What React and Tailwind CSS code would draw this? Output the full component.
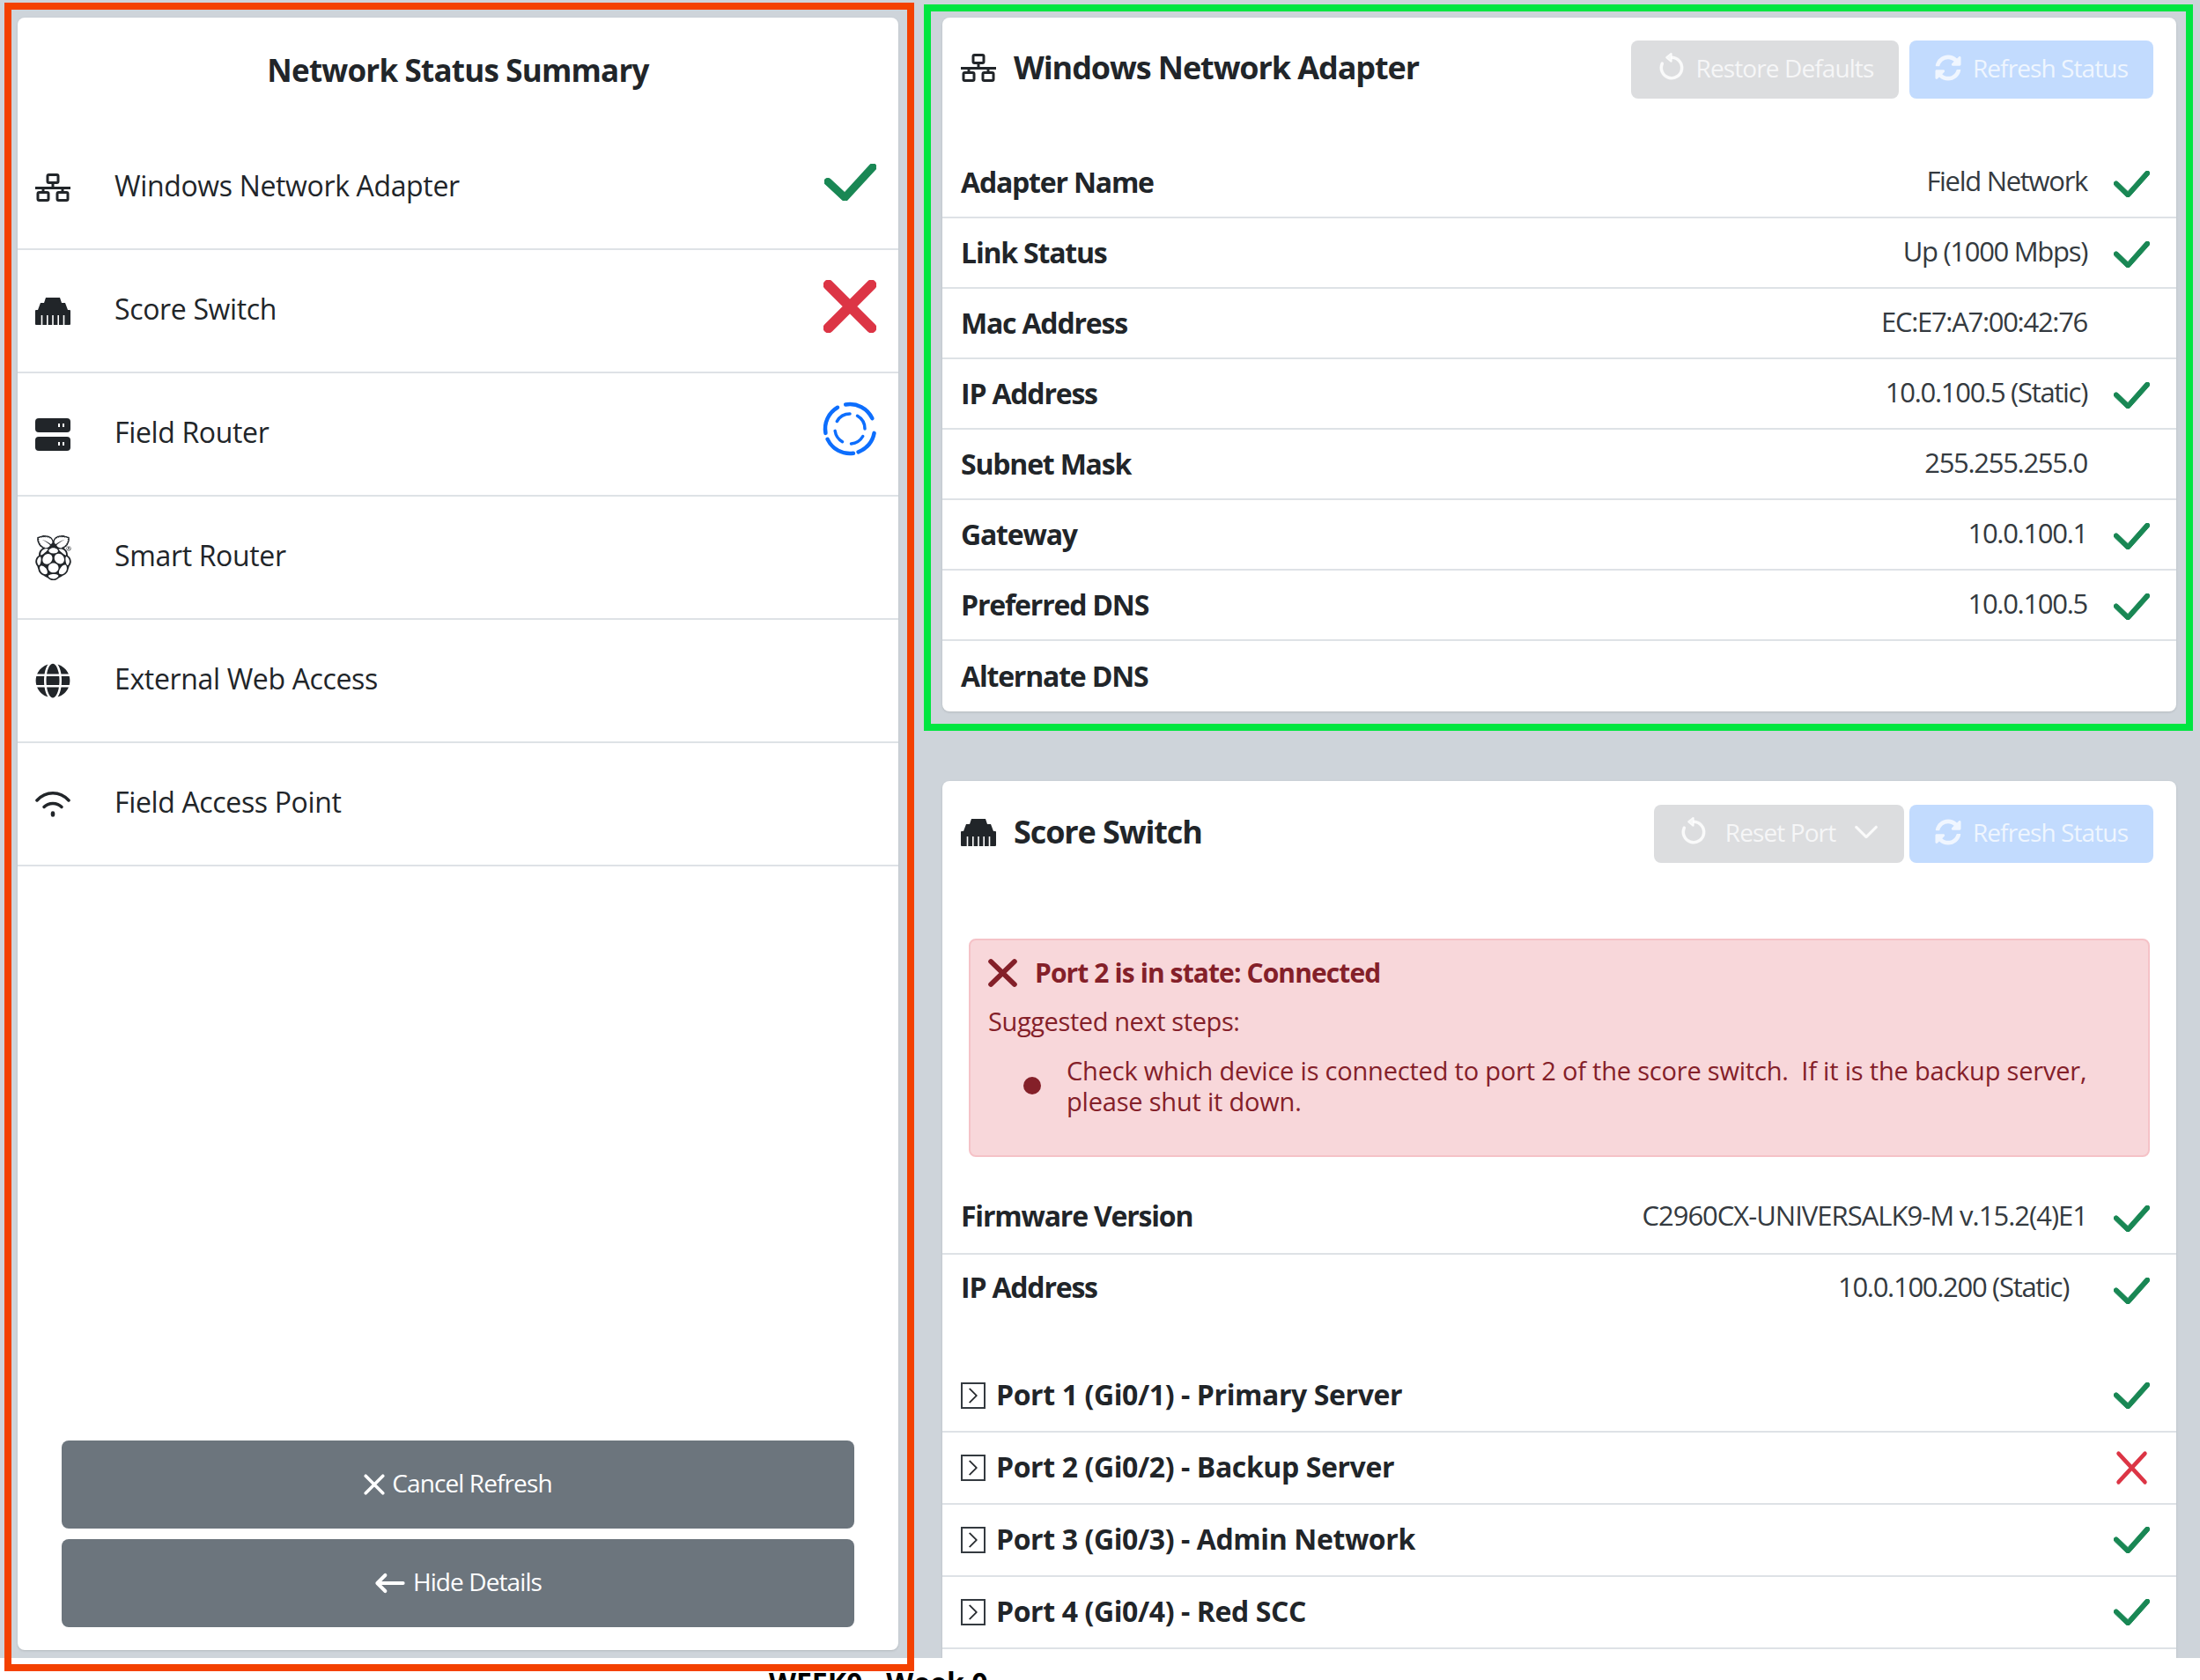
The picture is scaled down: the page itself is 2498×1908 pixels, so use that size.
import { BsArrowCounterclockwise, BsArrowLeft, BsChevronDown, BsChevronRight } from 'react-icons/bs';
import { FaGlobe, FaSyncAlt } from 'react-icons/fa';
import { SiRaspberrypi } from 'react-icons/si';

const CHECK_PATH = 'M12.736 3.97a.733.733 0 0 1 1.047 0c.286.289.29.756.01 1.05L7.88 12.01a.733.733 0 0 1-1.065.02L3.217 8.384a.757.757 0 0 1 0-1.06.733.733 0 0 1 1.047 0l3.052 3.093 5.4-6.425z';

const CheckIcon = ({ className }) => (
  <svg className={className} viewBox="3 3.75 11 8.5" preserveAspectRatio="none" fill="currentColor" stroke="currentColor" strokeWidth="0.25">
    <path d={CHECK_PATH} />
  </svg>
);

const CrossIcon = ({ className, width = 2 }) => (
  <svg className={className} viewBox="0 0 16 16" preserveAspectRatio="none" fill="none" stroke="currentColor" strokeWidth={width} strokeLinecap="round">
    <path d="M1.5 1.5 14.5 14.5M14.5 1.5 1.5 14.5" />
  </svg>
);

// One box on top, a bar, two boxes below
const NetworkIcon = () => (
  <svg className="w-10 h-8 shrink-0" viewBox="0 0 40 32" fill="none" stroke="currentColor" strokeWidth="3">
    <rect x="14" y="1.5" width="12" height="9" rx="1.5" />
    <path d="M20 10.5v6M0 16.5h40M9 16.5v5M31 16.5v5" />
    <rect x="3" y="21.5" width="12" height="9" rx="1.5" />
    <rect x="25" y="21.5" width="12" height="9" rx="1.5" />
  </svg>
);

// Plug seen from the front, five pins at the bottom
const SwitchIcon = ({ className }) => (
  <svg className={className} viewBox="0 0 40 31" fill="currentColor">
    <path d="M12 0h16l2 6h4l3 8h2a1 1 0 0 1 1 1v15a1 1 0 0 1-1 1H1a1 1 0 0 1-1-1V15a1 1 0 0 1 1-1h2l3-8h4z" />
    <path d="M7.5 20v11M13.8 20v11M20 20v11M26.2 20v11M32.5 20v11" stroke="#fff" strokeWidth="1.6" />
  </svg>
);

// Two stacked drives, taller than the stock hdd-stack glyph
const RouterIcon = ({ className }) => (
  <svg className={className} viewBox="0 0 40 37" fill="currentColor">
    <rect width="40" height="16" rx="4" />
    <rect y="21" width="40" height="16" rx="4" />
    <path d="M27 6v4M32 6v4M27 27v4M32 27v4" stroke="#fff" strokeWidth="2" />
  </svg>
);

const WifiIcon = ({ className }) => (
  <svg className={className} viewBox="0 0 40 30" fill="none" stroke="currentColor" strokeWidth="3.5" strokeLinecap="round">
    <path d="M2 11C12 0 28 0 38 11" />
    <path d="M10 18.5C15 13 25 13 30 18.5" />
    <path d="M20 25.5v2" strokeWidth="4.5" />
  </svg>
);

const arc = (r, from, to) => {
  const point = deg => {
    const a = ((deg - 90) * Math.PI) / 180;
    return `${(32 + r * Math.cos(a)).toFixed(2)} ${(32 + r * Math.sin(a)).toFixed(2)}`;
  };
  return `M${point(from)}A${r} ${r} 0 0 1 ${point(to)}`;
};

const SpinnerIcon = ({ className }) => (
  <svg className={className} viewBox="0 0 64 64" fill="none" stroke="currentColor" strokeWidth="4.5" strokeLinecap="round">
    {[[-10, 65], [100, 160], [172, 245], [260, 330]].map(([a, b]) => <path key={a} d={arc(28, a, b)} />)}
    {[[-60, 0], [30, 90], [120, 175], [210, 262]].map(([a, b]) => <path key={a} d={arc(17, a, b)} strokeWidth="3.5" />)}
  </svg>
);

const summary = [
  { name: 'Windows Network Adapter', icon: <NetworkIcon />, status: 'ok' },
  { name: 'Score Switch', icon: <SwitchIcon className="w-10 h-[31px]" />, status: 'bad' },
  { name: 'Field Router', icon: <RouterIcon className="w-10 h-[37px]" />, status: 'busy' },
  { name: 'Smart Router', icon: <SiRaspberrypi size={51} className="shrink-0" />, status: null },
  { name: 'External Web Access', icon: <FaGlobe size={40} />, status: null },
  { name: 'Field Access Point', icon: <WifiIcon className="w-10 h-[30px] shrink-0" />, status: null },
];

const adapterRows = [
  { label: 'Adapter Name', value: 'Field Network', ok: true },
  { label: 'Link Status', value: 'Up (1000 Mbps)', ok: true },
  { label: 'Mac Address', value: 'EC:E7:A7:00:42:76' },
  { label: 'IP Address', value: '10.0.100.5 (Static)', ok: true },
  { label: 'Subnet Mask', value: '255.255.255.0' },
  { label: 'Gateway', value: '10.0.100.1', ok: true },
  { label: 'Preferred DNS', value: '10.0.100.5', ok: true },
  { label: 'Alternate DNS', value: '' },
];

const ports = [
  { name: 'Port 1 (Gi0/1) - Primary Server', ok: true },
  { name: 'Port 2 (Gi0/2) - Backup Server', ok: false },
  { name: 'Port 3 (Gi0/3) - Admin Network', ok: true },
  { name: 'Port 4 (Gi0/4) - Red SCC', ok: true },
];

const SmallCheck = () => <CheckIcon className="w-[41px] h-[30px] text-[#198754] shrink-0" />;

const InfoRow = ({ row, last }) => (
  <div className={`h-20 flex items-center pl-[21px] pr-[30px] ${last ? '' : 'border-b-2 border-[#dee2e6]'}`}>
    <span className="font-bold tracking-[-1.2px] -mt-[1px]">{row.label}</span>
    <span className="ml-auto text-[31px] text-[#343a40] tracking-[-1.3px] -mt-[4px]">{row.value}</span>
    <span className="w-[41px] ml-[30px] flex mt-[3px]">{row.ok && <SmallCheck />}</span>
  </div>
);

const SummaryStatus = ({ status }) => {
  if (status === 'ok') return <CheckIcon className="w-[59px] h-[42px] text-[#198754] -mt-[12px]" />;
  if (status === 'bad') return <CrossIcon className="w-[60px] h-[60px] text-[#dc3545] -mt-[10px]" width={3.2} />;
  if (status === 'busy') return <SpinnerIcon className="w-16 h-16 text-[#0d6efd] -mt-[12px] -mr-[2px]" />;
  return null;
};

const HeaderButton = ({ children, className }) => (
  <div className={`h-[66px] pb-[4px] rounded-lg flex items-center justify-center text-white/75 text-[28px] tracking-[-0.9px] ${className}`}>
    {children}
  </div>
);

export default function App() {
  return (
    <div className="relative w-[2498px] h-[1908px] overflow-hidden bg-white text-[32px] text-[#212529] font-['Open_Sans',sans-serif]">
      <div className="h-[1883px] overflow-hidden bg-[#ced4da] flex gap-[50px] pl-5 pt-5">
        {/* Summary column */}
        <div className="w-[1000px] h-[1854px] bg-white rounded-lg shadow-sm flex flex-col">
          <h2 className="h-[124px] pb-[4px] flex items-center justify-center text-[35px] font-bold tracking-[-0.8px]">Network Status Summary</h2>
          {summary.map(item => (
            <div key={item.name} className="h-[140px] flex items-center pl-5 pr-[25px] border-b-2 border-[#dee2e6]">
              <span className="w-10 flex justify-center">{item.icon}</span>
              <span className="ml-[50px] pb-[4px] font-medium tracking-[-0.35px]">{item.name}</span>
              <span className="ml-auto flex"><SummaryStatus status={item.status} /></span>
            </div>
          ))}
          <div className="mt-auto px-[50px] pb-[26px] flex flex-col gap-3 text-white text-[28px] tracking-[-0.9px]">
            <div className="h-[100px] pb-[5px] rounded-lg bg-[#6c757d] flex items-center justify-center gap-[8px]">
              <CrossIcon className="w-[24px] h-[24px] mt-[4px]" width={2.4} />
              <span>Cancel Refresh</span>
            </div>
            <div className="h-[100px] pb-[5px] rounded-lg bg-[#6c757d] flex items-center justify-center gap-[8px]">
              <BsArrowLeft size={36} strokeWidth={0.8} className="mt-[4px]" />
              <span>Hide Details</span>
            </div>
          </div>
        </div>

        {/* Details column */}
        <div className="w-[1401px] flex flex-col gap-[79px]">
          <div className="h-[788px] bg-white rounded-lg shadow-sm flex flex-col shrink-0">
            <div className="h-[148px] pt-[26px] pl-[21px] pr-[26px] flex items-start">
              <div className="h-[66px] flex items-center gap-5 -mt-[2px]">
                <NetworkIcon />
                <span className="text-[36px] font-bold tracking-[-1.1px]">Windows Network Adapter</span>
              </div>
              <div className="ml-auto flex gap-3">
                <HeaderButton className="w-[304px] bg-[#dcdddf] gap-[11px]">
                  <BsArrowCounterclockwise size={34} strokeWidth={0.7} />
                  <span>Restore Defaults</span>
                </HeaderButton>
                <HeaderButton className="w-[277px] bg-[#c2dbfe] gap-[13px]">
                  <FaSyncAlt size={30} />
                  <span>Refresh Status</span>
                </HeaderButton>
              </div>
            </div>
            {adapterRows.map((row, i) => <InfoRow key={row.label} row={row} last={i === adapterRows.length - 1} />)}
          </div>

          <div className="bg-white rounded-lg shadow-sm shrink-0 pb-10">
            <div className="h-[179px] pt-[27px] pl-[21px] pr-[26px] flex items-start">
              <div className="h-[66px] flex items-center gap-5 -mt-[2px]">
                <SwitchIcon className="w-10 h-[31px]" />
                <span className="text-[36px] font-bold tracking-[-1.1px]">Score Switch</span>
              </div>
              <div className="ml-auto flex gap-[6px]">
                <HeaderButton className="w-[284px] bg-[#dcdddf]">
                  <BsArrowCounterclockwise size={34} strokeWidth={0.7} />
                  <span className="ml-[19px] mr-[20px]">Reset Port</span>
                  <BsChevronDown size={30} strokeWidth={0.8} />
                </HeaderButton>
                <HeaderButton className="w-[277px] bg-[#c2dbfe] gap-[13px]">
                  <FaSyncAlt size={30} />
                  <span>Refresh Status</span>
                </HeaderButton>
              </div>
            </div>

            <div className="mx-[30px] h-[248px] rounded-lg border-2 border-[#f5c2c7] bg-[#f8d7da] text-[#842029] text-[29px] tracking-[-0.4px] px-5 pt-[14px]">
              <div className="flex items-center gap-[20px] text-[30px] font-bold tracking-[-0.9px]">
                <CrossIcon className="w-[33px] h-[32px]" width={2.8} />
                <span>Port 2 is in state: Connected</span>
              </div>
              <div className="mt-[11px]">Suggested next steps:</div>
              <div className="mt-[16px] flex items-center pl-[40px] tracking-[-0.2px]">
                <span className="w-5 h-5 rounded-full bg-[#842029] shrink-0" />
                <span className="ml-[29px] leading-[35px] w-[1170px]">Check which device is connected to port 2 of the score switch.&nbsp; If it is the backup server, please shut it down.</span>
              </div>
            </div>

            <div className="h-[111px] flex items-end">
              <div className="w-full h-[82px] pb-[5px] flex items-center pl-[21px] pr-[30px] border-b-2 border-[#dee2e6]">
                <span className="font-bold tracking-[-1.2px]">Firmware Version</span>
                <span className="ml-auto text-[31px] text-[#343a40] tracking-[-1px]">C2960CX-UNIVERSALK9-M v.15.2(4)E1</span>
                <span className="w-[41px] ml-[30px] flex mt-[6px]"><SmallCheck /></span>
              </div>
            </div>
            <div className="h-[120px] pt-[13px] flex items-start pl-[21px] pr-[30px]">
              <span className="font-bold tracking-[-1.2px]">IP Address</span>
              <span className="ml-auto text-[31px] text-[#343a40] tracking-[-1.3px]">10.0.100.200 (Static)</span>
              <span className="w-[41px] ml-[51px] flex mt-[13px]"><SmallCheck /></span>
            </div>

            {ports.map(port => (
              <div key={port.name} className="h-[82px] pb-[2px] flex items-center pl-[21px] pr-[30px] border-b-2 border-[#dee2e6]">
                <span className="w-7 h-[30px] border-2 border-[#343a40] flex items-center justify-center shrink-0 mt-[2px]">
                  <BsChevronRight size={20} strokeWidth={0.5} />
                </span>
                <span className="ml-3 font-bold tracking-[-0.4px]">{port.name}</span>
                <span className="ml-auto flex w-[41px] justify-center mt-[2px]">
                  {port.ok ? <SmallCheck /> : <CrossIcon className="w-[37px] h-[40px] text-[#dc3545]" width={1.9} />}
                </span>
              </div>
            ))}
          </div>
        </div>
      </div>

      <div className="pl-[873px] pt-[4px] font-bold leading-[48px] text-black">WEEK0 - Week 0</div>

      {/* Annotation frames drawn over the screenshot */}
      <div className="absolute left-[5px] top-[3px] w-[1033px] h-[1895px] border-8 border-[#f44100]" />
      <div className="absolute left-[1049px] top-[5px] w-[1441px] h-[825px] border-8 border-[#00e640]" />
    </div>
  );
}
